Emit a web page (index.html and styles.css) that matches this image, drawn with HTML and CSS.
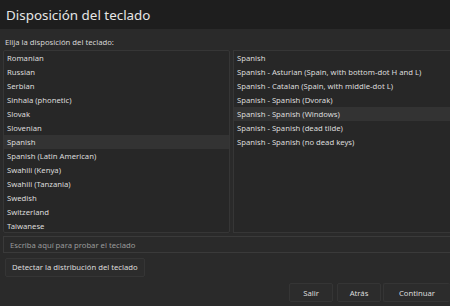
FILE: index.html
```html
<!DOCTYPE html>
<html lang="es">
<head>
    <meta charset="UTF-8">
    <meta name="viewport" content="width=device-width, initial-scale=1.0">
    <title>Disposición del teclado</title>
    <link rel="stylesheet" href="styles.css">
</head>
<body>
    <div class="titulo">
        <h1>Disposición del teclado</h1>
    </div>

    <div class="contenido">
        <p class="etiqueta">Elija la disposición del teclado:</p>

        <div class="listas">
            <ul class="lista lista-idiomas">
                <li>Romanian</li>
                <li>Russian</li>
                <li>Serbian</li>
                <li>Sinhala (phonetic)</li>
                <li>Slovak</li>
                <li>Slovenian</li>
                <li class="activo">Spanish</li>
                <li>Spanish (Latin American)</li>
                <li>Swahili (Kenya)</li>
                <li>Swahili (Tanzania)</li>
                <li>Swedish</li>
                <li>Switzerland</li>
                <li>Taiwanese</li>
            </ul>
            <ul class="lista lista-variantes">
                <li>Spanish</li>
                <li>Spanish - Asturian (Spain, with bottom-dot H and L)</li>
                <li>Spanish - Catalan (Spain, with middle-dot L)</li>
                <li>Spanish - Spanish (Dvorak)</li>
                <li class="activo">Spanish - Spanish (Windows)</li>
                <li>Spanish - Spanish (dead tilde)</li>
                <li>Spanish - Spanish (no dead keys)</li>
            </ul>
        </div>

        <input class="prueba" type="text" placeholder="Escriba aquí para probar el teclado">

        <button class="boton detectar">Detectar la distribución del teclado</button>
    </div>

    <div class="pie">
        <button class="boton">Salir</button>
        <button class="boton">Atrás</button>
        <button class="boton continuar">Continuar</button>
    </div>
</body>
</html>
```

FILE: styles.css
```css
body {
    font-family: "Noto Sans", "Open Sans", sans-serif;
    background-color: #2a2a2a;
    color: #dcdcdc;
    margin: 0;
    width: 450px;
    height: 306px;
    overflow: hidden;
    display: flex;
    flex-direction: column;
}

.titulo {
    background-color: #1e1e1e;
    height: 29px;
    padding: 0 6px;
    display: flex;
    align-items: center;
}

h1 {
    font-size: 13.4px;
    font-weight: normal;
    margin: 0;
    color: #e6e6e6;
}

.contenido {
    padding: 0 0 0 3px;
}

.etiqueta {
    font-size: 7.7px;
    margin: 8px 0 3px 2px;
    color: #d6d6d6;
}

.listas {
    display: flex;
    gap: 3px;
    height: 183px;
}

.lista {
    list-style: none;
    margin: 0;
    padding: 0;
    background-color: #272727;
    border: 1px solid #363636;
    font-size: 7.7px;
}

.lista li {
    height: 14px;
    line-height: 14px;
    padding: 0 3px;
    white-space: nowrap;
}

.lista li.activo {
    background-color: #333333;
}

.lista-idiomas {
    width: 225px;
    border-radius: 2px;
}

.lista-variantes {
    flex: 1;
    border-right: none;
}

.prueba {
    display: block;
    box-sizing: border-box;
    width: 447px;
    height: 17px;
    margin-top: 3px;
    background-color: #2a2a2a;
    border: 1px solid #3a3a3a;
    border-right: none;
    color: #dcdcdc;
    font-family: inherit;
    font-size: 7.7px;
    padding: 0 6px;
    outline: none;
}

.prueba::placeholder {
    color: #9a9a9a;
}

.boton {
    font-family: inherit;
    font-size: 7.7px;
    color: #dcdcdc;
    background-color: #2c2c2c;
    border: 1px solid #353535;
    border-radius: 2px;
    height: 19px;
    padding: 0 6px;
}

.detectar {
    margin: 3px 0 0 2px;
}

.pie {
    margin-top: auto;
    display: flex;
    justify-content: flex-end;
    padding: 0 0 4px 0;
}

.pie .boton {
    width: 44px;
    margin-left: 4px;
}

.pie .continuar {
    width: 67px;
    margin-left: 2px;
    border-right: none;
}
```
